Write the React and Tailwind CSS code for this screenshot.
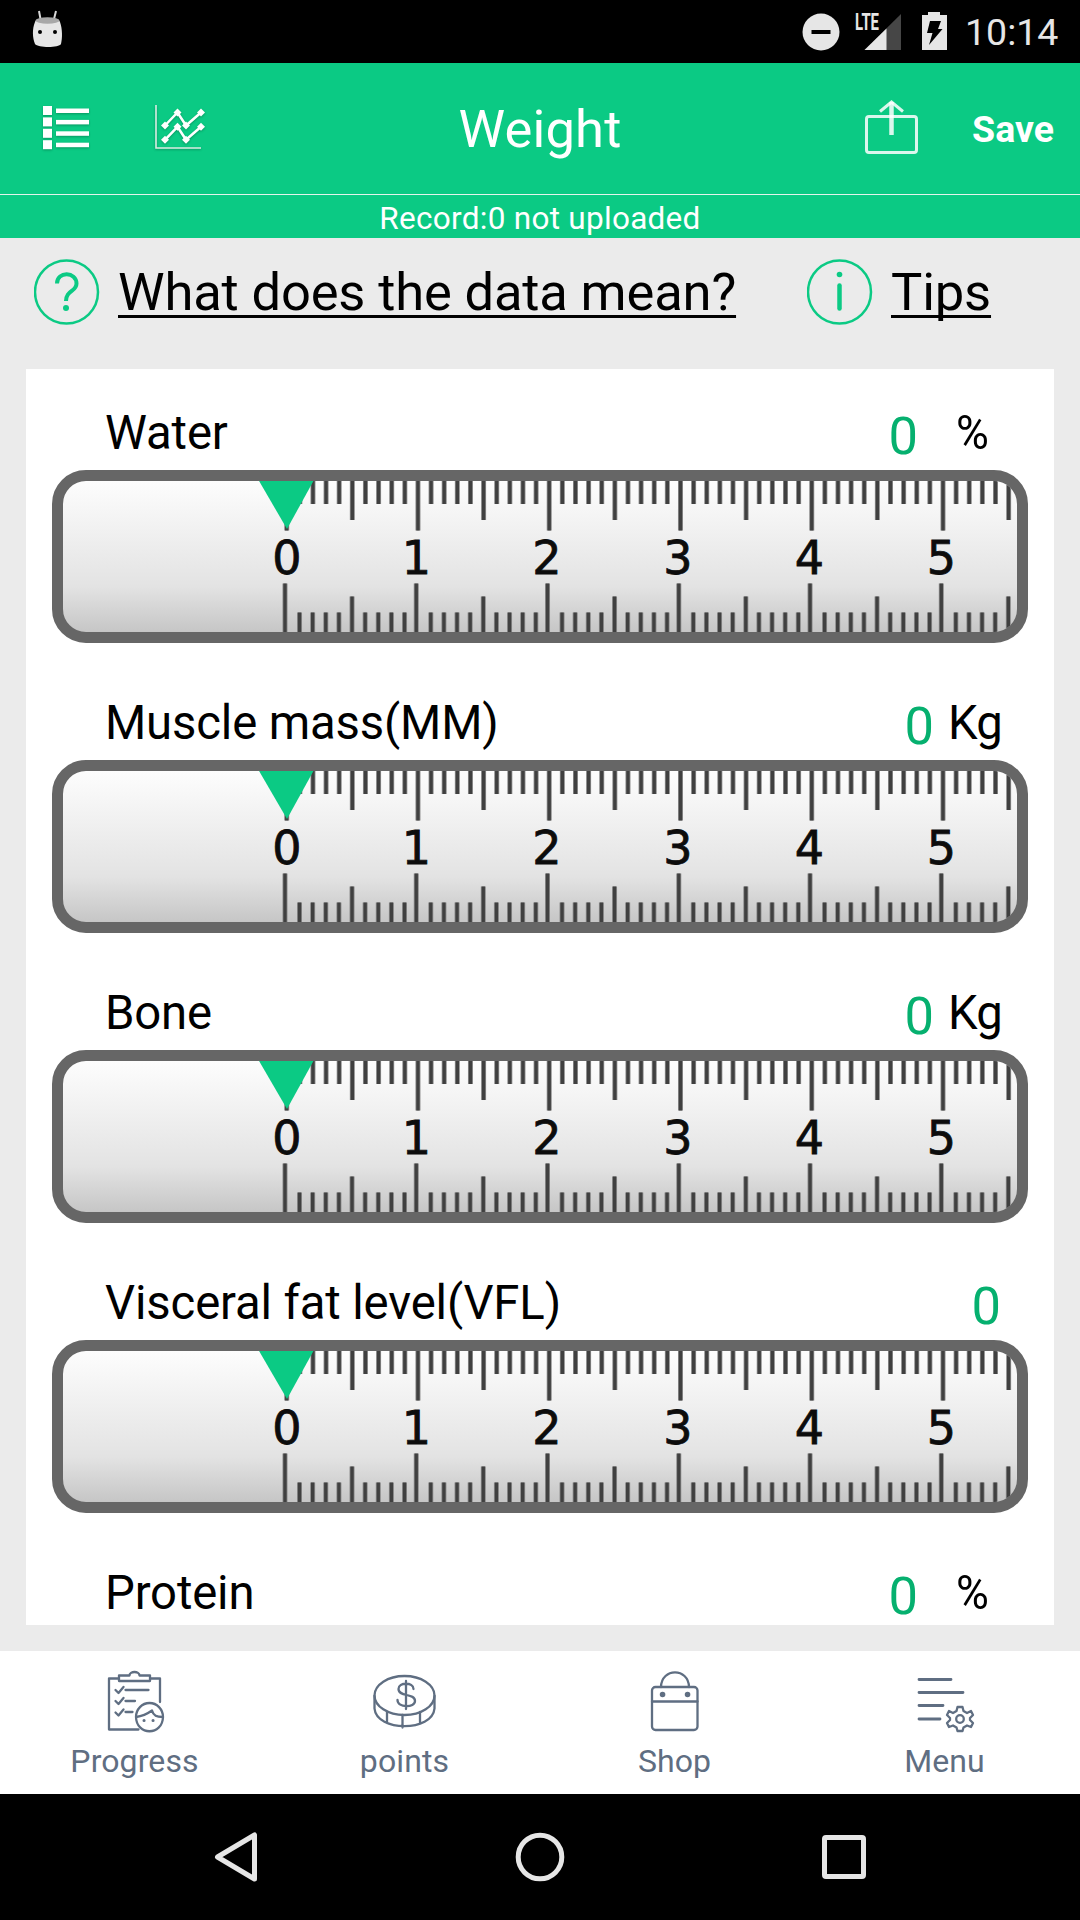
import React from "react";

const INK = "#5f6e82";

function StatusBar() {
  return (
    <div className="flex h-[63px] shrink-0 items-center bg-black pl-[31px] pr-[20px] text-[#e6e6e6]">
      <svg width="32" height="40" viewBox="0 0 32 40" className="mb-[8px]">
        <path d="M8 3l1.500 8M25 3l-2 8" stroke="#d8d8d8" strokeWidth="2" />
        <path d="M4 14C5 9 28 9 29 14C31.500 21 31.500 30 30 36C28 40 7 40 4 36C1.500 30 1 21 4 14Z" fill="#e6e6e6" />
        <ellipse cx="16.500" cy="12.500" rx="12" ry="3.300" fill="#a8a8a8" />
        <circle cx="9" cy="24" r="2" fill="#000" />
        <circle cx="24" cy="24" r="2" fill="#000" />
      </svg>
      <svg width="38" height="38" viewBox="0 0 38 38" className="ml-auto">
        <circle cx="19" cy="19" r="18.500" fill="#e6e6e6" />
        <rect x="9.500" y="17" width="19" height="4" fill="#000" />
      </svg>
      <svg width="48" height="40" viewBox="0 0 48 40" className="ml-[15px] overflow-visible">
        <path d="M46 2V38H9.500Z" fill="#464646" />
        <path d="M31.500 16.500V38H9.500Z" fill="#e6e6e6" />
        <text x="0" y="18" fontSize="23" fontWeight="700" textLength="24" lengthAdjust="spacingAndGlyphs" fill="#e6e6e6" fontFamily="Roboto, sans-serif">LTE</text>
      </svg>
      <svg width="25" height="38" viewBox="0 0 25 38" className="mb-[1px] ml-[19px]">
        <path d="M6 0H18V3H25V38H0V3H6Z" fill="#e6e6e6" />
        <path d="M8 9H19L16 17H20.500L7 33L10.500 21H5Z" fill="#000" />
      </svg>
      <span className="ml-[18px] mt-[1px] w-[95px] whitespace-nowrap text-[37.500px] leading-[42px]">10:14</span>
    </div>
  );
}

function Header() {
  return (
    <header className="shrink-0 bg-[#0bca84] text-white">
      <div className="grid h-[131px] grid-cols-3 items-center">
        <div className="flex items-center pl-[42px]">
          <svg width="50" height="48" viewBox="0 0 50 48" className="mb-[1px] drop-shadow-[0_1px_1px_rgba(0,70,40,0.4)]">
            {[0, 1, 2, 3].map((i) => (
              <g key={i} fill="#fff">
                <rect x="1" y={2 + i * 11.4} width="9" height="9" />
                <rect x="14" y={4.5 + i * 11.4} width="33" height="4.500" />
              </g>
            ))}
          </svg>
          <svg width="54" height="50" viewBox="0 0 54 50" className="mb-[1px] ml-[61px] drop-shadow-[0_1px_1px_rgba(0,70,40,0.4)]">
            <path d="M3 2V45H48" fill="none" stroke="#d9eee4" strokeWidth="1.600" />
            {[0, 14.3].map((dy) => (
              <g key={dy} transform={`translate(0 ${dy})`}>
                <path d="M12 22.500L24.500 9.500L33 22.500L48 9.500" fill="none" stroke="#fff" strokeWidth="2.500" />
                {[[12, 22.5], [24.5, 9.5], [33, 22.5], [48, 9.5]].map(([x, y]) => (
                  <path key={x} d={`M${x - 4} ${y}L${x} ${y - 4}L${x + 4} ${y}L${x} ${y + 4}Z`} fill="#fff" />
                ))}
              </g>
            ))}
          </svg>
        </div>
        <h1 className="text-center text-[52.500px] leading-[62px] tracking-[0.2px]">Weight</h1>
        <div className="flex items-center justify-end pr-[26px]">
          <svg width="54" height="54" viewBox="0 0 54 54" fill="none" stroke="#fff" strokeOpacity="0.85" className="mb-[3px]">
            <rect x="1.500" y="16.500" width="50" height="36" rx="2.500" strokeWidth="3" />
            <path d="M26.500 35V2" strokeWidth="4.500" />
            <path d="M15 11.500L26.500 2L38 11.500" strokeWidth="3" />
          </svg>
          <span className="ml-[53px] text-[37.500px] font-bold leading-[44px]">Save</span>
        </div>
      </div>
      <div className="h-[44px] border-t border-[#e4f4ec] text-center text-[31.500px] leading-[47px] tracking-[0.28px]">Record:0 not uploaded</div>
    </header>
  );
}

function HelpRow() {
  return (
    <div className="flex h-[131px] shrink-0 items-start pl-[34px] pt-[21px] text-[52.500px] leading-[66px] tracking-[-0.16px] text-black">
      <svg width="66" height="66" viewBox="0 0 66 66" fill="none" stroke="#0bca84">
        <circle cx="32.500" cy="33" r="31.500" strokeWidth="2.500" />
        <path d="M23 24.500C23 12 42.500 12.500 42.500 24.500C42.500 33 32 31 32 42" strokeWidth="4" />
        <circle cx="32" cy="49" r="3" fill="#0bca84" stroke="none" />
      </svg>
      <a className="ml-[18px] w-[618px] whitespace-nowrap underline decoration-[3px] underline-offset-[5px] [text-decoration-skip-ink:none]">What does the data mean?</a>
      <svg width="66" height="66" viewBox="0 0 66 66" fill="none" stroke="#0bca84" className="ml-[71px]">
        <circle cx="32.500" cy="33" r="31.500" strokeWidth="2.500" />
        <path d="M32.500 26.500V49.500" strokeWidth="4.500" strokeLinecap="round" />
        <circle cx="32.500" cy="15.500" r="2.800" fill="#0bca84" stroke="none" />
      </svg>
      <a className="ml-[18px] underline decoration-[3px] underline-offset-[5px] [text-decoration-skip-ink:none]">Tips</a>
    </div>
  );
}

const TICKS = Array.from({ length: 56 }, (_, i) => i);
const DIGIT_X = [224, 353.5, 484, 615, 746.5, 878.5];

function Ruler() {
  return (
    <div className="h-[173px] w-[976px] overflow-hidden rounded-[34px] border-[11px] border-[#666] bg-linear-to-b from-[#fdfdfd] via-[#e3e3e3] via-70% to-[#c6c6c6]">
      <svg width="954" height="151" viewBox="0 0 954 151" className="block">
        {TICKS.map((i) => {
          const major = i % 10 === 0;
          const mid = i % 5 === 0;
          const x = 223.7 + i * 13.126;
          const top = major ? 49.5 : mid ? 39 : 23;
          const bottom = major ? 102.5 : mid ? 115.5 : 131.5;
          const bx = major ? x - 1.7 : x - 0.3;
          return (
            <g key={i}>
              <path d={`M${x} 0V${top}M${bx} ${bottom}V151`} stroke="#8a8a8a" strokeWidth="5" />
              <path d={`M${x} 0V${top}M${bx} ${bottom}V151`} stroke="#404040" strokeWidth="3.300" />
            </g>
          );
        })}
        {DIGIT_X.map((x, i) => (
          <text key={i} x={x} y="93.300" textAnchor="middle" fontSize="46" fontFamily="DejaVu Sans, sans-serif" fill="#0c0c0c" stroke="#0c0c0c" strokeWidth="0.800">{i}</text>
        ))}
        <path d="M195.500 -1H251L224 48Z" fill="#0bca84" />
      </svg>
    </div>
  );
}

function Metric({ label, unit }) {
  return (
    <section className="flex h-[290px] shrink-0 flex-col items-center">
      <div className="flex h-[101px] w-full items-start pl-[79px] text-[47.250px] leading-[56px] text-black">
        <span className="mt-[36px] tracking-[-0.14px]">{label}</span>
        <span className={`ml-auto mt-[39px] text-[52.500px] leading-[56px] text-[#06b06f] ${unit ? "" : "mr-[53px]"}`}>0</span>
        {unit === "%" && <span className="ml-[38px] mr-[64px] mt-[36px] inline-block w-[34px] text-[47.250px]"><span className="inline-block origin-left scale-x-95">%</span></span>}
        {unit === "Kg" && <span className="ml-[14px] mr-[52px] mt-[36px] tracking-[-0.8px]">Kg</span>}
      </div>
      <Ruler />
    </section>
  );
}

const METRICS = [
  ["Water", "%"],
  ["Muscle mass(MM)", "Kg"],
  ["Bone", "Kg"],
  ["Visceral fat level(VFL)", ""],
  ["Protein", "%"],
];

function ProgressIcon() {
  return (
    <>
      <path d="M14 8.500H4.500V59.500H34M46 8.500H55.500V32" />
      <path d="M14.500 5.500H25C25 .8 35 .8 35 5.500H45.500V11H14.500Z" />
      <path d="M11 20l3 3 5-6M11 31l3 3 5-6M11 42.500l3 3 5-6M21 20H44M21 31H30.500M21 42H28" />
      <path d="M31.500 47A13.500 14 0 1 1 58.500 47C58 66 32 66 31.500 47ZM31.500 47C39 46 44 43 47.500 40.500C49 46 52 47 58.500 47" />
      <path d="M39.500 50.500h.1M48.500 50.500h.1" strokeWidth="3" />
    </>
  );
}

function PointsIcon() {
  return (
    <>
      <ellipse cx="30" cy="25.500" rx="30" ry="19.500" />
      <path d="M0 26V38.500C2 62 58 62 60 38.500V26M12.500 42V53M28 45V57.500M45.500 42V53" />
      <path d="M31.500 11V39M39 19C39 12 24 12 24 19C24 27 40.500 23 40.500 31C40.500 38 23 38 23 30" />
    </>
  );
}

function ShopIcon() {
  return (
    <>
      <rect x="7.500" y="17" width="45.500" height="43" rx="3.500" />
      <path d="M7.500 31.500H53M16.500 17C17 -2.500 44 -2.500 44.500 17" />
      <path d="M18 24.500h.1M43 24.500h.1" strokeWidth="5.500" />
    </>
  );
}

function MenuIcon() {
  return (
    <>
      <path d="M4.500 9.500H36.500M4.500 22.500H48.500M4.500 35.500H28.500M4.500 49H25.500" strokeWidth="2.800" />
      <circle cx="45.500" cy="49" r="3.800" />
      <path d="M43 37H48L49 41L52.500 43L56.500 41L58.500 45L55.500 48V50L58.500 53L56.500 57L52.500 55.500L49 57.500L48 61H43L42 57.500L38.500 55.500L34.500 57L32.500 53L35.500 50V48L32.500 45L34.500 41L38.500 43L42 41Z" />
    </>
  );
}

const TABS = [
  ["Progress", ProgressIcon],
  ["points", PointsIcon],
  ["Shop", ShopIcon],
  ["Menu", MenuIcon],
];

function TabBar() {
  return (
    <nav className="grid h-[143px] shrink-0 grid-cols-4 bg-white text-[#5f6e82]">
      {TABS.map(([label, Icon]) => (
        <div key={label} className="flex flex-col items-center pr-px pt-[19px]">
          <svg width="62" height="64" viewBox="-0.5 0 62 64" fill="none" stroke={INK} strokeWidth="2.300" strokeLinejoin="round" strokeLinecap="round" className="overflow-visible">
            <Icon />
          </svg>
          <span className="mt-[8px] text-[32px] leading-[38px] tracking-[0.1px]">{label}</span>
        </div>
      ))}
    </nav>
  );
}

function SystemBar() {
  return (
    <div className="flex h-[126px] shrink-0 items-center justify-between bg-black pl-[212px] pr-[212px]">
      <svg width="48" height="54" viewBox="0 0 48 54">
        <path d="M5.500 27L42.500 5V49Z" fill="none" stroke="#e6e6e6" strokeWidth="5" strokeLinejoin="round" />
      </svg>
      <svg width="50" height="50" viewBox="0 0 50 50">
        <circle cx="25" cy="25" r="21.800" fill="none" stroke="#e6e6e6" strokeWidth="5" />
      </svg>
      <svg width="48" height="48" viewBox="0 0 48 48">
        <rect x="4.500" y="4.500" width="39" height="39" rx="1.500" fill="none" stroke="#e6e6e6" strokeWidth="5" />
      </svg>
    </div>
  );
}

export default function App() {
  return (
    <div className="flex h-[1920px] w-[1080px] flex-col overflow-hidden bg-[#ebebeb] font-[Roboto,sans-serif]">
      <StatusBar />
      <Header />
      <HelpRow />
      <main className="mx-[26px] mb-[26px] flex min-h-0 flex-1 flex-col overflow-hidden bg-white">
        {METRICS.map(([label, unit]) => (
          <Metric key={label} label={label} unit={unit} />
        ))}
      </main>
      <TabBar />
      <SystemBar />
    </div>
  );
}
